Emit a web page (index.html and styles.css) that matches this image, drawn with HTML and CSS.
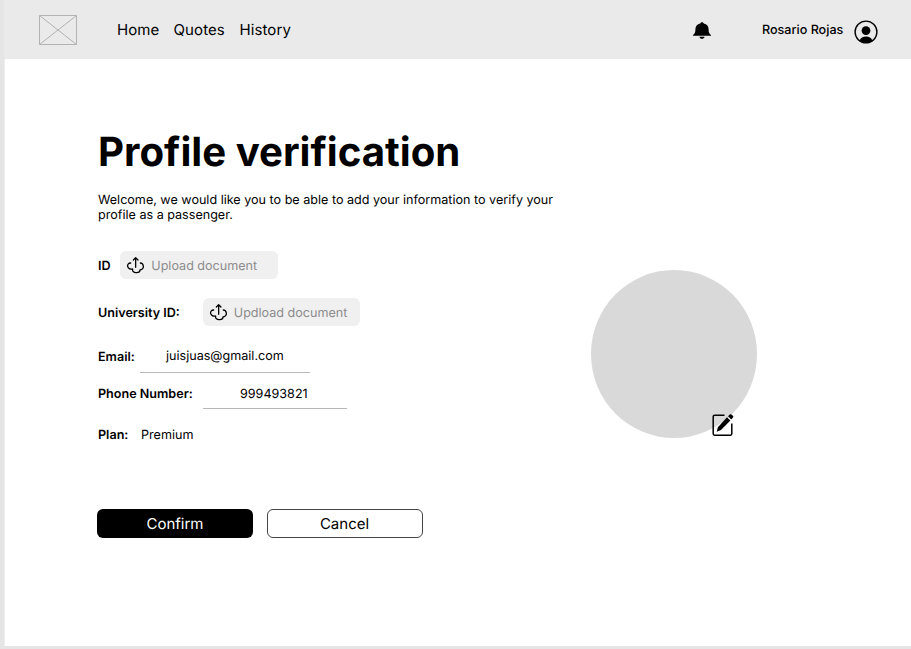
FILE: index.html
```html
<!DOCTYPE html>
<html lang="en">
<head>
<meta charset="utf-8">
<title>Profile verification</title>
<link rel="stylesheet" href="styles.css">
</head>
<body>
<svg width="0" height="0" class="defs" aria-hidden="true">
  <symbol id="upload" viewBox="0 0 54 54">
    <g fill="none" stroke="#000" stroke-width="3.800" stroke-linecap="round" stroke-linejoin="round">
      <path d="M29 34V5M22 12L29 5L36 12"/>
      <path d="M14 21C7 21 4 26 5 31C6 37 12 41 20 39C18 46 24 51 32 50C38 50 42 47 42 42C49 41 53 36 52 30C51 24 47 21 43 21"/>
    </g>
  </symbol>
</svg>
<div class="page">
  <header class="topbar">
    <svg class="logo" viewBox="0 0 38 30"><path d="M.5 .5H37.5V29.5H.5ZM.5 .5L37.5 29.5M37.5 .5L.5 29.5"/></svg>
    <nav class="nav">
      <a class="home">Home</a><a class="quotes">Quotes</a><a class="history">History</a>
    </nav>
    <svg class="bell" viewBox="0 0 18 18"><path d="M9 0.2C10 .2 10.6 .8 10.7 1.5C14 2 15.6 4.3 15.6 7.5C15.6 10.5 16.2 11.6 18 13V13.8H0V13C1.8 11.6 2.4 10.5 2.4 7.5C2.4 4.3 4 2 7.3 1.5C7.4 .8 8 .2 9 .2ZM6.4 14.7H11.6C11.2 16.1 10.3 16.8 9 16.8C7.7 16.8 6.8 16.1 6.4 14.7Z"/></svg>
    <span class="user">Rosario Rojas</span>
    <svg class="avatar" viewBox="0 0 24 24"><circle cx="12" cy="12" r="10.900" fill="none" stroke="#000" stroke-width="1.4"/><circle cx="12" cy="10.6" r="4.4"/><path d="M5.6 20.6C6.5 17.8 9 16.4 12 16.4S17.500 17.800 18.400 20.600C16.500 22.200 14.500 23 12 23S7.500 22.200 5.600 20.600Z"/></svg>
  </header>
  <main class="content">
    <section class="details">
      <h1>Profile verification</h1>
      <p class="intro">Welcome, we would like you to be able to add your information to verify your profile as a passenger.</p>
      <div class="row id"><b>ID</b><button class="upload"><svg><use href="#upload"/></svg><span>Upload document</span></button></div>
      <div class="row uni"><b>University ID:</b><button class="upload"><svg><use href="#upload"/></svg><span>Updload document</span></button></div>
      <div class="row email"><b>Email:</b><span class="value">juisjuas@gmail.com</span></div>
      <div class="row phone"><b>Phone Number:</b><span class="value">999493821</span></div>
      <div class="row plan"><b>Plan:</b><span>Premium</span></div>
      <div class="actions"><button class="btn confirm">Confirm</button><button class="btn cancel">Cancel</button></div>
    </section>
    <div class="photo">
      <svg class="edit" viewBox="0 0 22 24"><path d="M12.500 2.200H2.600Q1.200 2.200 1.200 3.600V20.800Q1.200 22.200 2.600 22.200H18.400Q19.800 22.200 19.800 20.800V10.500" fill="none" stroke="#000" stroke-width="1.5"/><path d="M4.700 18.800L5.900 14.300L15 4.300L18.400 7.400L9 17.100ZM16 3.300L17.800 1.500Q18.700 .8 19.400 1.500L21.100 3.100Q21.700 3.800 21 4.600L19.300 6.500Z"/></svg>
    </div>
  </main>
</div>
</body>
</html>
```
FILE: styles.css
```css
* { box-sizing: border-box; }
body {
  margin: 0;
  background: #e5e5e5;
  font-family: Inter, "Liberation Sans", sans-serif;
  font-size: 12.580px;
  text-rendering: geometricPrecision;
  color: #000;
}
.defs { display: block; }
.page { margin-left: 4px; height: 646px; background: #fff; border-left: 1px solid #eee; }
.topbar {
  display: flex;
  align-items: flex-start;
  height: 59px;
  margin-left: -1px;
  background: #eaeaea;
}
.logo { width: 38px; height: 30px; margin: 15px 0 0 35px; fill: none; stroke: #b2b2b2; stroke-width: 1; }
.nav { display: flex; margin: 20px 0 0 40px; width: 576px; font-size: 15px; line-height: 20px; }
.nav a { letter-spacing: .1px; }
.home { width: 56.500px; }
.quotes { width: 66px; }
.bell { width: 18px; height: 18px; margin-top: 22px; }
.user { width: 92px; margin: 22px 0 0 51px; line-height: 18px; font-weight: 500; }
.avatar { width: 24px; height: 24px; margin-top: 19.500px; }
.content { display: flex; }
.details { width: 493px; padding: 68px 0 0 93px; }
h1 { margin: 0; font-size: 40.200px; line-height: 50px; font-weight: 700; white-space: nowrap; }
.intro { width: 470px; margin: 16px 0 0; line-height: 15px; }
.row { display: flex; align-items: center; }
.row b { padding-top: 1px; font-weight: 600; white-space: nowrap; }
.row.id { margin-top: 28px; height: 28px; }
.id b { width: 22px; }
.row.uni { margin-top: 19px; height: 28px; }
.uni b { width: 104.500px; }
.id b, .uni b, .email b { padding-top: 2px; }
.upload {
  display: flex;
  align-items: center;
  width: 157.500px;
  height: 28px;
  padding: 0 0 0 6px;
  border: 0;
  border-radius: 6px;
  background: #f0f0f0;
  color: #8c8c8c;
  font: inherit;
  text-rendering: inherit;
  white-space: nowrap;
}
.upload svg { width: 18px; height: 18px; margin-right: 7.300px; }
.upload span { padding-top: 2px; }
.row.email { margin-top: 13px; height: 34px; }
.email b { width: 42px; }
.value { display: flex; align-items: center; padding-top: 2px; border-bottom: 1px solid #b8b8b8; }
.email .value { width: 170px; height: 34px; padding-left: 26px; }
.row.phone { margin-top: 6px; height: 30px; }
.phone b { width: 105px; }
.phone .value { width: 144px; height: 30px; padding-left: 37px; }
.row.plan { margin-top: 18px; height: 16px; }
.plan b { width: 43px; padding-top: 0; }
.actions { display: flex; gap: 14px; margin: 66px 0 0 -1px; }
.btn { width: 156px; height: 29px; padding: 0; border-radius: 6px; font: 15px/28px Inter, sans-serif; text-rendering: inherit; }
.confirm { border: 0; background: #000; color: #fff; }
.cancel { padding-right: 1px; border: 1px solid #444; background: #fff; color: #000; line-height: 26px; }
.photo { position: relative; width: 166px; height: 168px; margin: 211px 0 0 93px; border-radius: 50%; background: #d9d9d9; }
.edit { position: absolute; left: 121px; top: 143px; width: 22px; height: 24px; }
```
